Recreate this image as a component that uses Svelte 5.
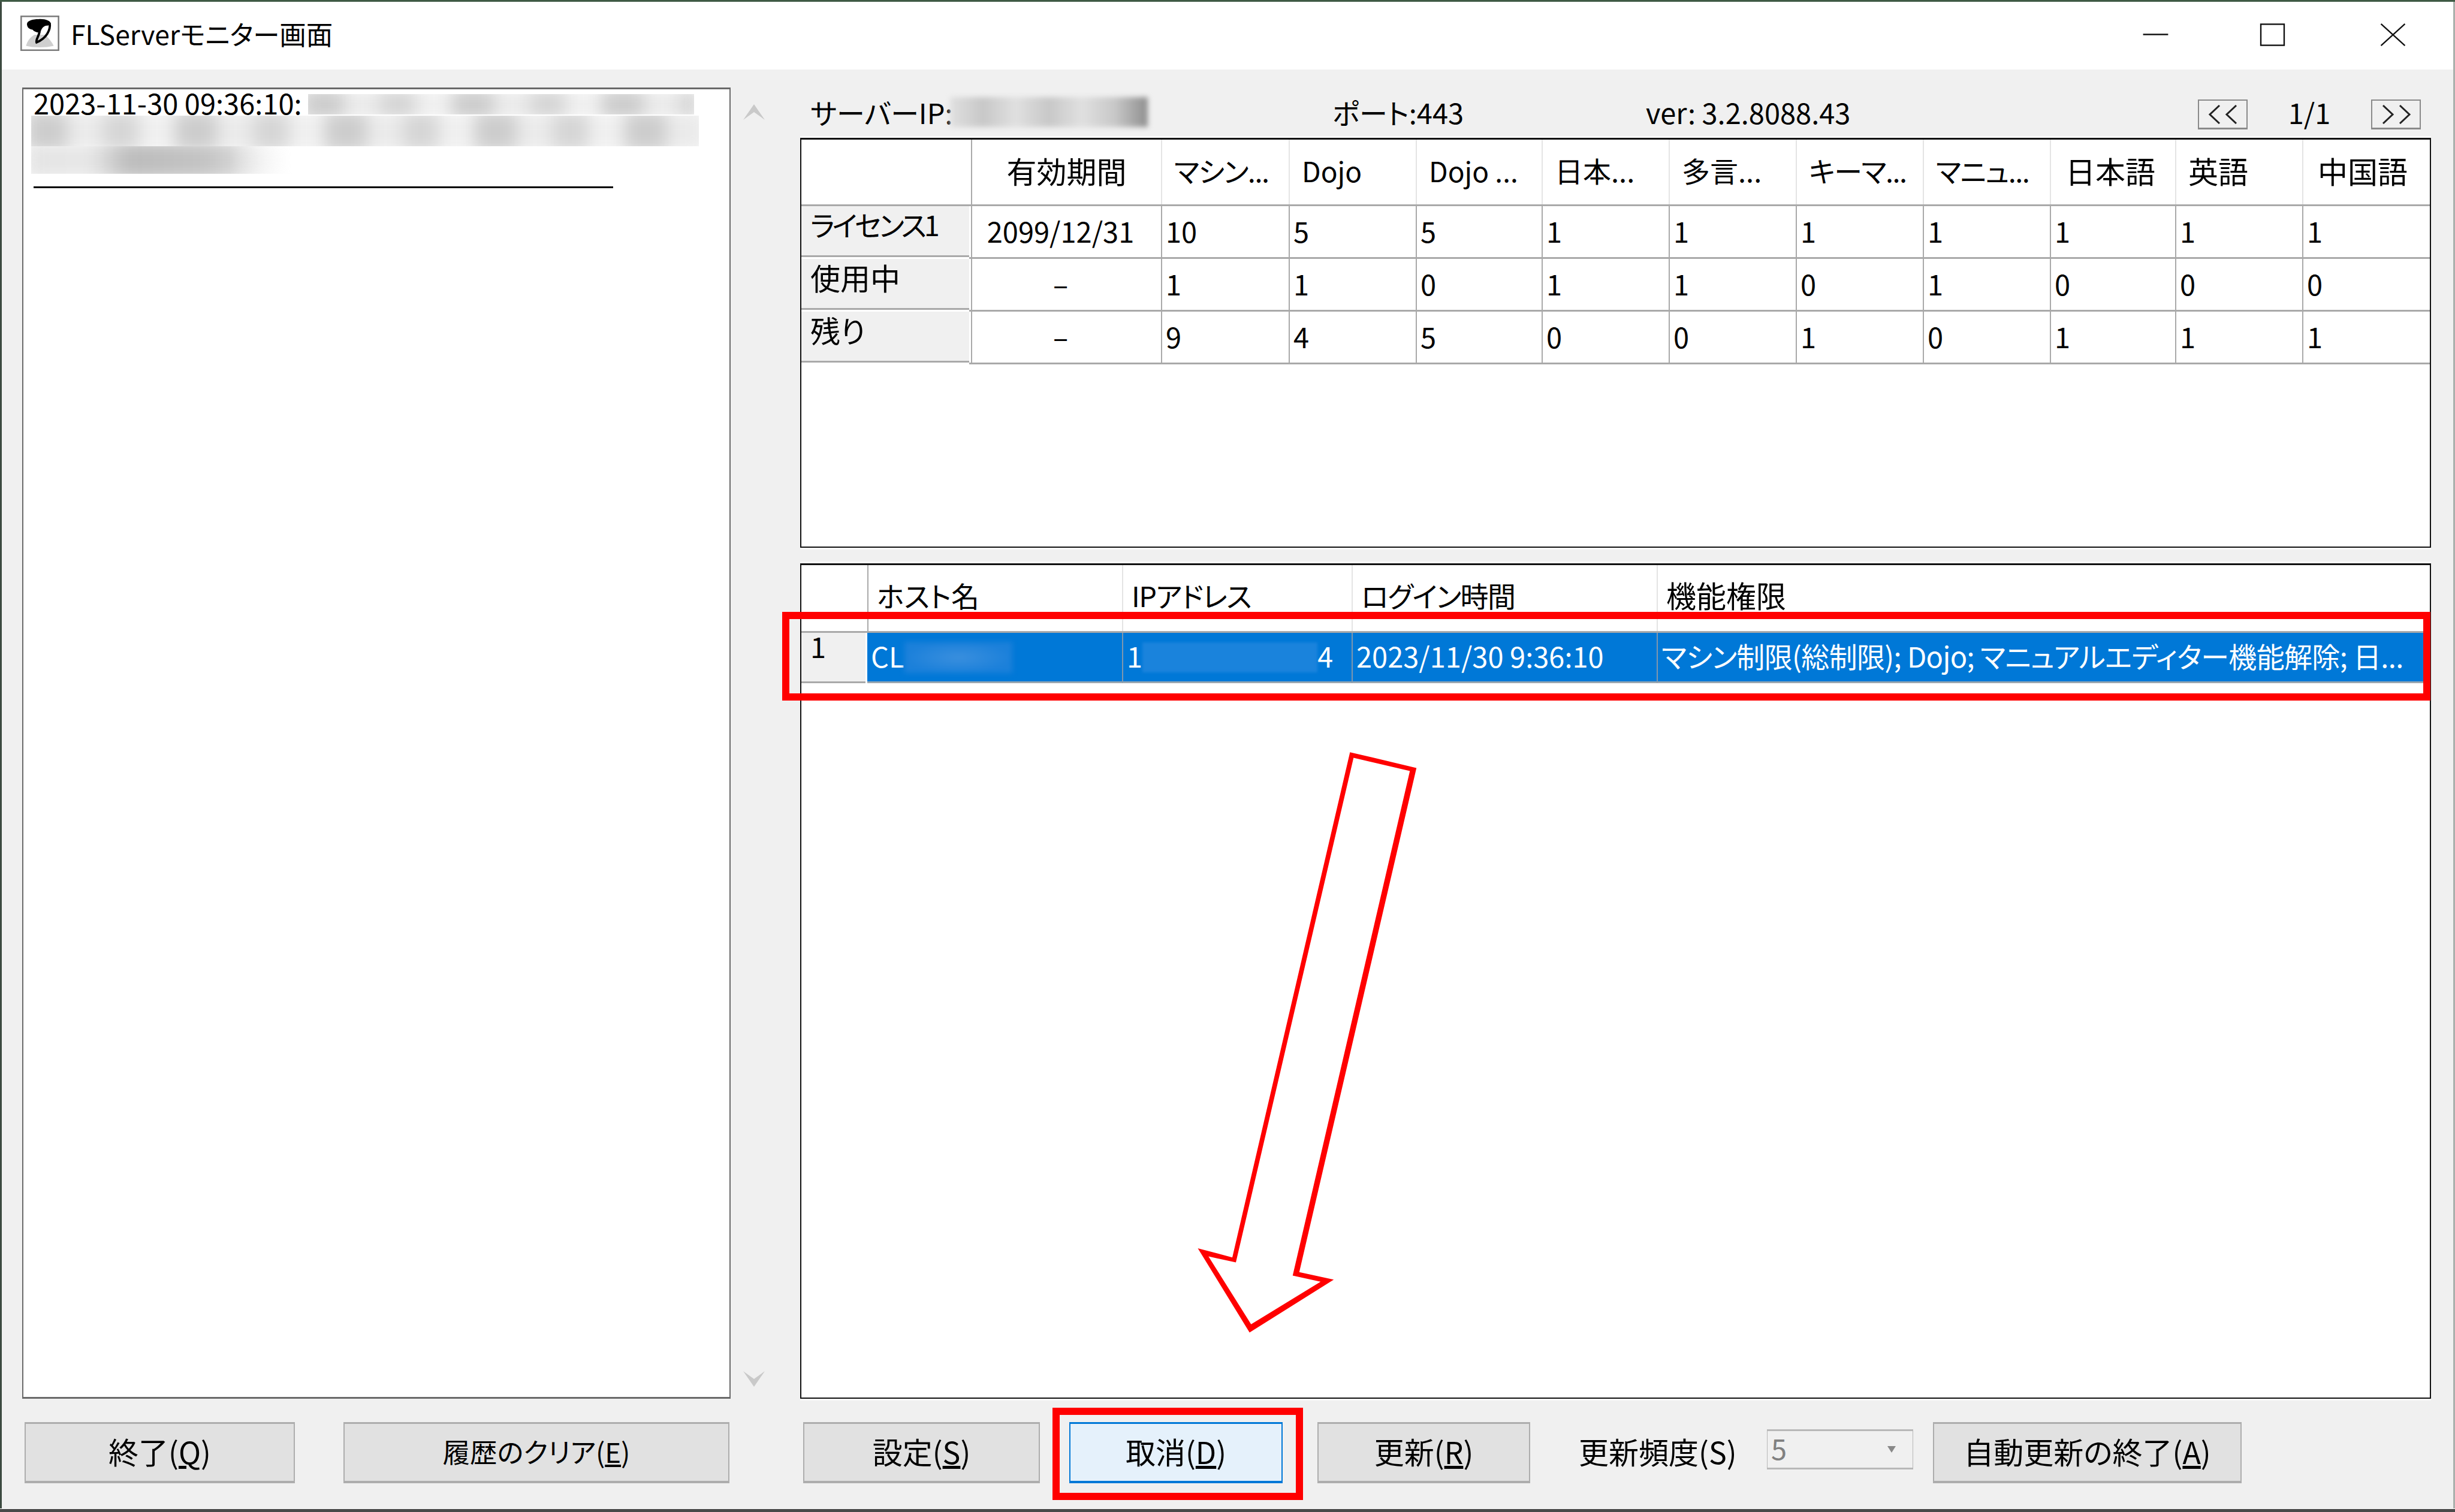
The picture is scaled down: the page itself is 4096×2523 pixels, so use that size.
<script>
  const licCols = [283, 317, 213, 212, 210, 212, 212, 212, 212, 209, 212, 216];
  const licHead = [
    ['有効期間', 'c k'], ['マシン...', 'n'], ['Dojo', 'l'], ['Dojo ...', 'l'], ['日本...', ''], ['多言...', ''],
    ['キーマ...', 'n'], ['マニュ...', 'n'], ['日本語', 'wide k'], ['英語', 'k'], ['中国語', 'wide k']
  ];
  const licRows = [
    ['ライセンス1', 'n2', '2099/12/31', '10', '5', '5', '1', '1', '1', '1', '1', '1', '1'],
    ['使用中', 'k', '–', '1', '1', '0', '1', '1', '0', '1', '0', '0', '0'],
    ['残り', 'k', '–', '9', '4', '5', '0', '0', '1', '0', '1', '1', '1']
  ];
  const licGrid = licCols.map((w) => w + 'px').join(' ');
</script>

<div class="window">
  <div class="topline"></div>
  <header class="titlebar">
    <svg class="appicon" viewBox="0 0 77 70" aria-hidden="true">
      <rect x="1.5" y="1.5" width="74" height="67" fill="#fff" stroke="#7c7c7c" stroke-width="3" />
      <path d="M11 60 C14 50 20 42 28 38 L48 38 C56 44 62 52 66 60 C50 64 26 64 11 60Z" fill="#cfcfcf" />
      <path d="M13 17 C13 10 24 7 36 7 C48 6 60 10 60 16 C60 18 56 20 52 20 C47 20 42 25 40 32 C36 35 28 33 24 28 C16 27 13 22 13 17Z" fill="#000" />
      <path d="M58 15 C60 28 52 45 32 53 C30 48 36 42 38 32" fill="none" stroke="#000" stroke-width="4.5" />
    </svg>
    <span class="title">FLServerモニター画面</span>
    <div class="winbtns">
      <svg class="wb" viewBox="0 0 44 40"><path d="M0 19.5H44" stroke="#111" stroke-width="2.5" /></svg>
      <svg class="wb" viewBox="0 0 44 40"><rect x="1.5" y="1.5" width="41" height="37" fill="none" stroke="#111" stroke-width="2.5" /></svg>
      <svg class="wb wb-close" viewBox="0 0 44 40"><path d="M1 1L43 39M43 1L1 39" stroke="#111" stroke-width="2.5" fill="none" /></svg>
    </div>
  </header>

  <main class="body">
    <section class="log">
      <div class="logline">
        <span>2023-11-30 09:36:10:</span>
        <div class="blotch s1"></div>
      </div>
      <div class="blotch s2"></div>
      <div class="blotch s3"></div>
      <div class="rule"></div>
    </section>

    <div class="scroller">
      <svg class="chev" viewBox="0 0 36 26"><path d="M0 26L18 0L36 26L18 13Z" fill="#c9c9c9" /></svg>
      <svg class="chev" viewBox="0 0 36 26"><path d="M0 0L18 13L36 0L18 26Z" fill="#c9c9c9" /></svg>
    </div>

    <section class="right">
      <div class="info">
        <span class="i-ip">サーバーIP:</span>
        <div class="s-ip"></div>
        <span class="i-port">ポート:443</span>
        <span class="i-ver">ver: 3.2.8088.43</span>
        <button class="pg" aria-label="previous">
          <svg viewBox="0 0 56 32"><path d="M22 1L6 16L22 31M50 1L34 16L50 31" fill="none" stroke="#222" stroke-width="3" /></svg>
        </button>
        <span class="i-page">1/1</span>
        <button class="pg" aria-label="next">
          <svg viewBox="0 0 56 32"><path d="M6 1L22 16L6 31M34 1L50 16L34 31" fill="none" stroke="#222" stroke-width="3" /></svg>
        </button>
      </div>

      <div class="table lic">
        <div class="lgrid lhead" style:grid-template-columns={licGrid}>
          <div class="hc corner"></div>
          {#each licHead as [label, kind]}
            <div class="hc {kind}">{label}</div>
          {/each}
        </div>
        {#each licRows as row}
          <div class="lgrid lrow" style:grid-template-columns={licGrid}>
            <div class="rh {row[1]}"><span>{row[0]}</span></div>
            {#each row.slice(2) as v, i}
              <div class="dc" class:c={i === 0}>{v}</div>
            {/each}
          </div>
        {/each}
      </div>

      <div class="table users">
        <div class="ugrid uhead">
          <div class="hc corner"></div>
          <div class="hc">ホスト名</div>
          <div class="hc n">IPアドレス</div>
          <div class="hc n3">ログイン時間</div>
          <div class="hc k">機能権限</div>
        </div>
        <div class="ugrid urow">
          <div class="rh"><span>1</span></div>
          <div class="uc">CL<div class="s-host"></div></div>
          <div class="uc">1<div class="s-addr"></div>4</div>
          <div class="uc">2023/11/30 9:36:10</div>
          <div class="uc perm">マシン制限(総制限); Dojo; マニュアルエディター機能解除; 日...</div>
        </div>
      </div>
    </section>

    <div class="btns-left">
      <button class="btn b-quit">終了(<u>Q</u>)</button>
      <button class="btn b-clear">履歴のクリア(<u>E</u>)</button>
    </div>

    <div class="btns-right">
      <button class="btn b-set">設定(<u>S</u>)</button>
      <button class="btn b-cancel">取消(<u>D</u>)</button>
      <button class="btn b-upd">更新(<u>R</u>)</button>
      <span class="freq">更新頻度(S)</span>
      <div class="combo"><span>5</span><i></i></div>
      <button class="btn b-auto">自動更新の終了(<u>A</u>)</button>
    </div>
  </main>
  <div class="botline"></div>

  <div class="redbox rb-row"></div>
  <div class="redbox rb-btn"></div>
  <svg class="arrow" viewBox="0 0 4839 2981" aria-hidden="true">
    <path fill="#ff0000" d="M2661 1483L2792 1514L2561 2508L2629 2523L2463 2627L2361 2461L2429 2479Z" />
    <path fill="#fff" d="M2668 1494L2779 1520L2548 2515L2603 2527L2466 2611L2382 2477L2436 2489Z" />
  </svg>
</div>

<style>
  :global(body) { margin: 0; background: #444; }
  .window {
    position: relative;
    width: 4096px;
    height: 2523px;
    overflow: hidden;
    display: flex;
    flex-direction: column;
    background: #f0f0f0;
    color: #000;
    font-family: "Noto Sans CJK JP", "Noto Sans", sans-serif;
    font-size: 47px;
    font-feature-settings: "palt";
    box-shadow: inset 3px 0 0 #3c4a40, inset -3px 0 0 #aab0ac;
  }
  .topline { height: 3px; background: #3f5a45; flex: none; }
  .titlebar {
    height: 113px;
    flex: none;
    margin: 0 3px;
    background: #fff;
    display: flex;
    align-items: center;
    padding-left: 31px;
  }
  .appicon { width: 65px; height: 59px; margin-top: -8px; flex: none; }
  .title { margin-left: 19px; margin-top: -6px; line-height: 1; font-size: 44.5px; }
  .winbtns { margin-left: auto; margin-right: 79px; margin-top: -3px; display: flex; gap: 152px; }
  .wb { width: 43px; height: 38px; display: block; }
  .wb-close { margin-left: 6px; }

  .body {
    flex: 1;
    display: grid;
    grid-template-columns: 1182px 116px 2721px;
    grid-template-rows: 2218px 1fr;
    padding-left: 37px;
  }

  .log {
    margin-top: 30px;
    background: #fff;
    border: 2px solid #696969;
    border-top-width: 3px;
    border-bottom-width: 3px;
    padding: 3px 0 0 17px;
    box-sizing: border-box;
    display: flex;
    flex-direction: column;
    align-items: flex-start;
    line-height: 44px;
    white-space: nowrap;
  }
  .logline { display: flex; align-items: center; height: 44px; }
  .logline span { margin-top: -6px; }
  .blotch { position: relative; overflow: hidden; }
  .blotch::before {
    content: "";
    position: absolute;
    inset: -10px;
    filter: blur(14px);
    background:
      repeating-linear-gradient(90deg, #cdcdcd 0 70px, #ebebeb 70px 130px, #d6d6d6 130px 190px, #f0f0f0 190px 250px);
  }
  .s1 { width: 644px; height: 34px; margin-left: 10px; }
  .s2 { width: 1114px; height: 51px; margin-top: -3px; margin-left: -4px; }
  .s3 { width: 473px; height: 46px; margin-left: -4px; -webkit-mask-image: linear-gradient(90deg, #000 70%, transparent 92%); mask-image: linear-gradient(90deg, #000 70%, transparent 92%); }
  .s3::before { background: linear-gradient(90deg, #e4e4e4, #e8e8e8 22%, #bcbcbc 35%, #c4c4c4 62%, #e6e6e6 80%, #fff); }
  .rule { width: 967px; height: 3px; background: #000; margin-top: 21px; }

  .scroller {
    margin-top: 30px;
    display: flex;
    flex-direction: column;
    justify-content: space-between;
    align-items: flex-start;
    padding: 28px 0 20px 21px;
  }
  .chev { width: 36px; height: 26px; }

  .right { display: flex; flex-direction: column; grid-row: 1; grid-column: 3; }
  .info {
    height: 114px;
    flex: none;
    box-sizing: border-box;
    display: flex;
    align-items: center;
    padding-top: 36px;
    padding-left: 17px;
    white-space: nowrap;
  }
  .info span { margin-top: -10px; }
  .i-ip { width: 233px; flex: none; }
  .s-ip { width: 330px; height: 50px; margin-top: -8px; flex: none; background: linear-gradient(90deg, #e0e0e0, #c8c8c8, #e0e0e0, #c8c8c8, #e0e0e0, #c8c8c8, #8f8f8f); filter: blur(4px); }
  .i-port { margin-left: 308px; width: 523px; flex: none; }
  .i-ver { width: 921px; flex: none; }
  .pg {
    width: 83px;
    height: 50px;
    flex: none;
    padding: 0;
    box-sizing: border-box;
    background: #f0f0f0;
    border: 2px solid #8a8a8a;
    border-bottom-width: 3px;
    display: flex;
    align-items: center;
    justify-content: center;
  }
  .pg svg { width: 56px; height: 32px; display: block; }
  .i-page { width: 206px; text-align: center; flex: none; }

  .table {
    box-sizing: border-box;
    background: #fff;
    border: 2px solid #111;
    border-top-width: 3px;
    box-shadow: 0 -3px 0 #fafafa, 0 3px 0 #fafafa;
    width: 2721px;
    overflow: hidden;
    flex: none;
  }
  .lic { height: 684px; }
  .users { height: 1394px; margin-top: 26px; }
  .lgrid { display: grid; margin-right: -10px; }
  .lhead { height: 108px; border-bottom: 3px solid #a9a9a9; }
  .lrow { height: 85px; border-bottom: 3px solid #a9a9a9; margin-left: 0; border-image: linear-gradient(90deg, transparent 281px, #a9a9a9 281px) 1; }
  .hc {
    display: flex;
    align-items: center;
    padding: 0 0 7px 20px;
    border-left: 2px solid #e4e4e4;
    white-space: nowrap;
    overflow: hidden;
  }
  .corner { border-left: 0; }
  .hc.c { justify-content: center; padding-left: 0; border-left-color: #a9a9a9; }
  .hc.wide { padding-left: 24px; }
  .k { font-size: 50px; }
  .n { letter-spacing: -1.5px; }
  .l { font-size: 46px; }
  .rh {
    background: #f0f0f0;
    border-bottom: 3px solid #a9a9a9;
    padding: 3px 0 0 15px;
    margin-bottom: 0;
    height: 79px;
    line-height: 54px;
    box-sizing: content-box;
    margin-right: 3px;
  }
  .rh span { display: block; }
  .n2 { letter-spacing: -4px; }
  .dc {
    display: flex;
    align-items: center;
    padding: 0 0 4px 6px;
    border-left: 2px solid #a9a9a9;
  }
  .dc.c { justify-content: center; padding: 0 20px 4px 0; }

  .ugrid { display: grid; grid-template-columns: 110px 425px 383px 509px 1290px; }
  .uhead { height: 110px; }
  .uhead .hc { padding: 0 0 12px 14px; }
  .uhead .corner + .hc { border-left-color: #a9a9a9; }
  .n3 { letter-spacing: -1.5px; }
  .urow { height: 87px; border-top: 3px solid #a9a9a9; }
  .urow .rh { height: 81px; line-height: 44px; padding-top: 0; margin-right: 3px; }
  .uc {
    background: #0078d7;
    color: #fff;
    display: flex;
    align-items: center;
    padding: 0 0 6px 6px;
    border-left: 2px solid #7f97ae;
    white-space: nowrap;
    overflow: hidden;
    box-sizing: border-box;
    height: 84px;
    border-bottom: 3px solid #9aa6b0;
  }
  .urow .rh + .uc { border-left: 0; }
  .s-host { width: 180px; height: 52px; margin-top: 6px; filter: blur(4px); background: radial-gradient(closest-side, #3a8fde, #1b80da); }
  .s-addr { width: 292px; height: 50px; margin-top: 6px; filter: blur(2px); background: #1a83dc; }
  .perm { padding-left: 6px; letter-spacing: -0.65px; }

  .btns-left { grid-row: 2; grid-column: 1; display: flex; gap: 81px; padding-top: 39px; padding-left: 4px; align-items: flex-start; }
  .btns-right {
    grid-row: 2;
    grid-column: 3;
    display: flex;
    align-items: flex-start;
    padding-top: 39px;
    padding-left: 5px;
  }
  .btn {
    height: 102px;
    box-sizing: border-box;
    padding: 0 0 6px;
    background: #e1e1e1;
    border: 2px solid #adadad;
    border-top-width: 3px;
    border-bottom-width: 4px;
    font: inherit;
    font-size: 50px;
    color: #000;
    flex: none;
    white-space: nowrap;
  }
  .b-quit { width: 451px; }
  .b-clear { width: 644px; font-size: 45.5px; }
  .b-set { width: 395px; }
  .b-cancel { width: 356px; margin-left: 49px; background: #e5f1fb; border-color: #0078d7; }
  .b-upd { width: 355px; margin-left: 58px; }
  .freq { margin-left: 81px; width: 312px; height: 102px; line-height: 96px; flex: none; white-space: nowrap; font-size: 50px; }
  .combo {
    width: 244px;
    height: 67px;
    margin-top: 12px;
    margin-left: 2px;
    flex: none;
    box-sizing: border-box;
    border: 1px solid #b8b8b8;
    border-top-width: 3px;
    border-bottom-width: 3px;
    display: flex;
    align-items: center;
    justify-content: space-between;
    padding: 0 28px 6px 6px;
    color: #808080;
    line-height: 1;
  }
  .combo i { width: 0; height: 0; margin-top: 6px; border: 7px solid transparent; border-top: 11px solid #888; border-bottom: 0; }
  .b-auto { width: 515px; margin-left: 33px; }
  .botline { height: 5px; flex: none; background: #4a4a4a; border-top: 1px solid #fff; }

  .redbox { position: absolute; border: 12px solid #ff0000; box-sizing: border-box; pointer-events: none; }
  .rb-row { left: 1305px; top: 1021px; width: 2750px; height: 148px; }
  .rb-btn { left: 1756px; top: 2349px; width: 418px; height: 154px; }
  .arrow { position: absolute; left: 0; top: 0; width: 4096px; height: 2523px; pointer-events: none; }
</style>
